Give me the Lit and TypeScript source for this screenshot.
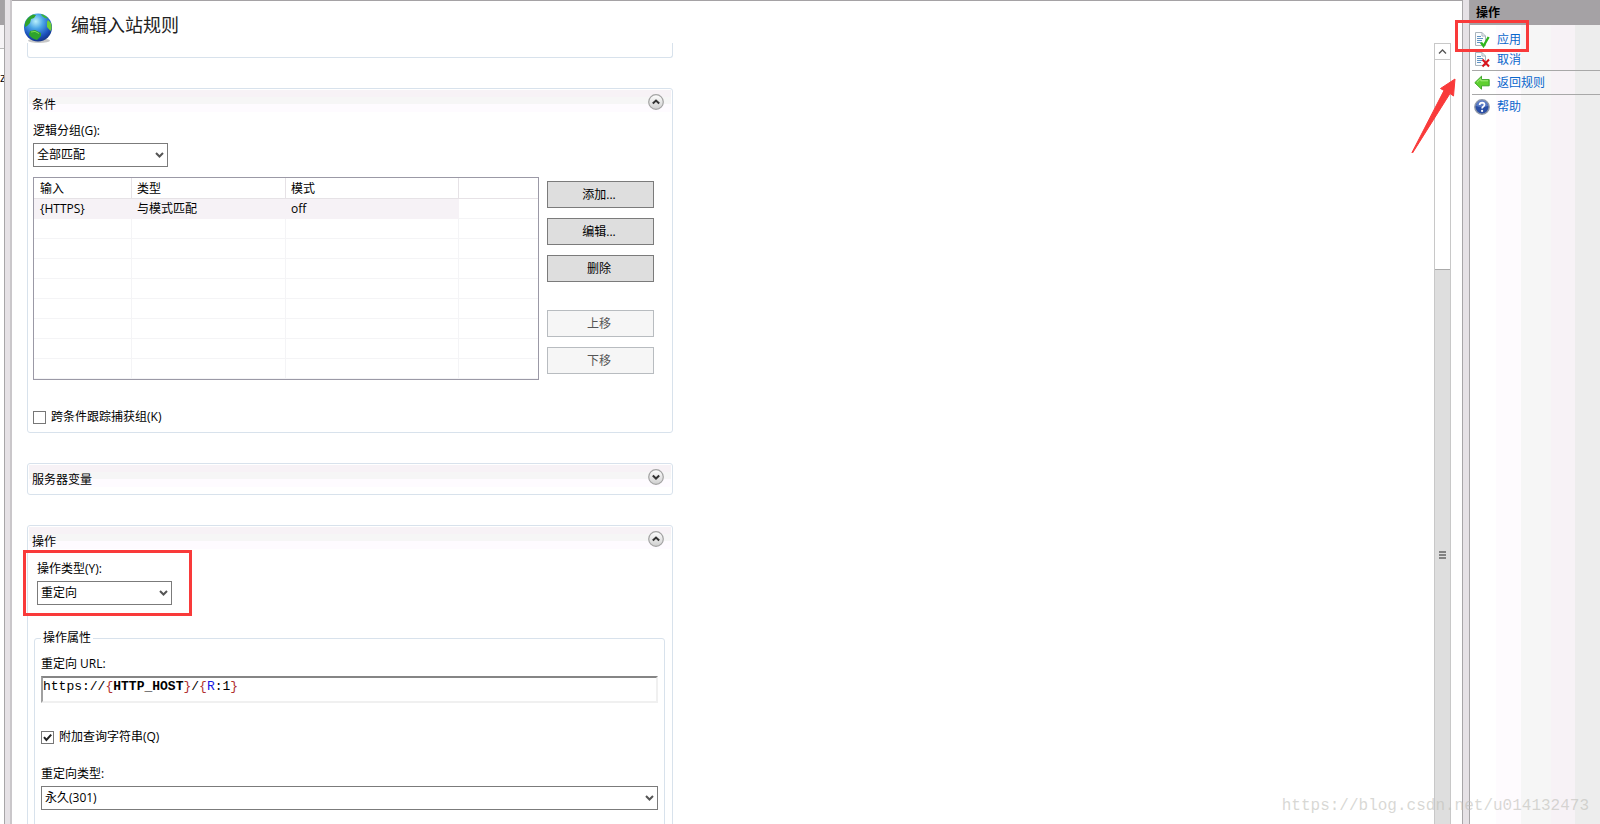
import { LitElement, html, css, svg, nothing } from "lit";
import { customElement, property } from "lit/decorators.js";

const base = css`
  *, *::before, *::after { box-sizing: border-box; }
  :host { font: 12px/18px "Open Sans", "Noto Sans CJK SC", sans-serif; color: #000; }
`;

const chevron = svg`<path d="M1 2 L4.5 5.5 L8 2" fill="none" stroke="#555" stroke-width="2"/>`;

@customElement("rule-panel")
class RulePanel extends LitElement {
  @property() heading = "";
  @property({ type: Boolean }) open = false;

  static styles = [base, css`
    :host { display: block; border: 1px solid #d8e2ec; border-radius: 3px; background: #fff; }
    .head { display: flex; align-items: flex-start; justify-content: space-between; height: 30px; padding: 5px 8px 0 4px; position: relative; }
    .head::before { content: ""; position: absolute; inset: 1px 1px 7px 1px;
      background: linear-gradient(#f7f2f6 0 7px, #f6f6f6 7px 14px, #fefbff 14px); }
    .title { position: relative; margin: 0; padding-top: 2px; font-size: 12px; line-height: 18px; font-weight: 400; }
    .toggle { position: relative; width: 16px; height: 16px; padding: 0; border: 0; background: none; }
    .toggle svg { display: block; }
  `];

  render() {
    return html`
      <div class="head">
        <h2 class="title">${this.heading}</h2>
        <button class="toggle" aria-label=${this.heading} aria-expanded=${this.open}>
          <svg width="16" height="16" viewBox="0 0 16 16">
            <defs><linearGradient id="g" x2="0" y2="1"><stop offset="0" stop-color="#fff"/><stop offset="1" stop-color="#cfcfcf"/></linearGradient></defs>
            <circle cx="8" cy="8" r="7.3" fill="url(#g)" stroke="#a3a3a3" stroke-width="1.2"/>
            <path d=${this.open ? "M4.8 9.6 L8 6.6 L11.2 9.6" : "M4.8 6.6 L8 9.6 L11.2 6.6"} fill="none" stroke="#333" stroke-width="2"/>
          </svg>
        </button>
      </div>
      ${this.open ? html`<slot></slot>` : nothing}`;
  }
}

const rows = [["{HTTPS}", "与模式匹配", "off", ""], ...Array.from({ length: 8 }, () => ["", "", "", ""])];

const pageIcon = svg`
  <path d="M1.5 .5 H8 L11.5 4 V13.5 H1.5 Z" fill="#fbfcfd" stroke="#a9b4bd"/>
  <path d="M8 .5 V4 H11.5" fill="none" stroke="#a9b4bd"/>
  <path d="M3 4.5 H7 M3 6.5 H9 M3 8.5 H8 M3 10.5 H7" stroke="#5f93c4"/>`;

const icons = {
  apply: svg`${pageIcon}<path d="M7 10.5 L9.5 14 L14.6 5" fill="none" stroke="#2fb51c" stroke-width="2.3"/>`,
  cancel: svg`${pageIcon}<path d="M8.5 7.5 L15 14.5 M15 7.5 L8.5 14.5" stroke="#d8141c" stroke-width="2"/>`,
  back: svg`<path d="M.8 7.7 L7.5 1.2 V4.6 H15.2 V10.8 H7.5 V14.2 Z" fill="#5fd02f" stroke="#3fa62a"/><path d="M3 7.3 L6.8 3.6 V5.8 H14" fill="none" stroke="#a6ee7d"/>`,
  help: svg`<circle cx="8" cy="8" r="7.2" fill="#2b4fa5" stroke="#8f98a8" stroke-width="1.4"/><path d="M2 7 A6 6 0 0 1 14 7 Q8 9 2 7" fill="#6f8fd2" opacity=".7"/><path d="M5.6 6 Q5.8 3.7 8.1 3.7 Q10.5 3.8 10.5 5.8 Q10.4 7 9.1 7.8 Q8.1 8.5 8.1 9.6" fill="none" stroke="#fff" stroke-width="1.7"/><circle cx="8.1" cy="11.9" r="1.1" fill="#fff"/>`,
};

@customElement("app-root")
class AppRoot extends LitElement {
  static styles = [base, css`
    :host { display: flex; height: 100vh; overflow: hidden; position: relative; background: #fff; }
    button, input, select { font: inherit; color: inherit; }

    .tree { flex: 0 0 4px; overflow: hidden; }
    .tree-head { height: 25px; background: #a5a2a5; }
    .tree-bar { height: 24px; background: #f6f4f6; border-bottom: 1px solid #bbb; }
    .tree-item { padding-top: 20px; }
    .splitter { flex: 0 0 8px; background: #e6e2e6; border: solid #a8a6a8; border-width: 0 1px; }
    .splitter.left { border-right: 2px solid #cac7ca; }

    main { flex: 1; min-width: 0; display: flex; flex-direction: column; border-top: 1px solid #a5a2a5; }
    .caption { flex: 0 0 42px; display: flex; align-items: flex-start; gap: 17px; padding: 10px 0 0 11px; }
    .caption h1 { margin: 0; font-size: 18px; line-height: 28px; font-weight: 400; color: #222; }
    .view { flex: 1; min-height: 0; display: flex; justify-content: space-between; padding: 0 11px 0 15px; }
    .content { flex: 0 1 646px; display: flex; flex-direction: column; gap: 30px; overflow: hidden; }
    .content > * { flex: none; }
    .prev { height: 15px; border: 1px solid #d8e2ec; border-top: 0; border-radius: 0 0 3px 3px; }

    .scroll { flex: 0 0 17px; display: flex; flex-direction: column; overflow: hidden; border: solid #c8c8c8; border-width: 0 1px; }
    .scroll button { flex: 0 0 17px; display: grid; place-items: center; padding: 0; border: solid #c8c8c8; border-width: 1px 0; background: #fff; }
    .track { flex: 0 0 209px; }
    .thumb { flex: 0 0 571px; display: grid; place-items: center; background: #dedede; border-top: 1px solid #aaa; }

    .body { display: flex; flex-direction: column; padding: 3px 5px 6px; }
    .field { display: flex; flex-direction: column; gap: 3px; }
    .field > label { align-self: flex-start; }
    .select { display: grid; align-items: center; justify-items: end; width: 135px; }
    .select.wide { width: auto; }
    .select > * { grid-area: 1 / 1; }
    .select svg { margin-right: 4px; pointer-events: none; }
    select { appearance: none; width: 100%; height: 24px; margin: 0; padding: 0 20px 0 3px; border: 1px solid #7b7b7b; border-radius: 0; background: #fff; }

    .grid { display: flex; align-items: flex-start; gap: 8px; margin: 10px 13px 0 0; }
    .frame { flex: 1; border: 1px solid #9b99a6; }
    table { width: 100%; table-layout: fixed; border-spacing: 0; }
    th, td { height: 20px; padding: 1px 0 0 5px; text-align: left; font-weight: 400; line-height: 18px; border: solid #f4f4f6; border-width: 0 1px 1px 0; }
    th { height: 21px; border-color: #e6e2e6; }
    th:last-child, td:last-child { border-right: 0; }
    th:first-child, td:first-child { padding-left: 6px; }
    .c1 { width: 98px; } .c2 { width: 154px; } .c3 { width: 173px; }
    .picked td:not(:last-child) { background: #f6f2f6; border-color: #f6f2f6; }
    .buttons { flex: 0 0 107px; display: flex; flex-direction: column; gap: 10px; padding-top: 4px; }
    .buttons button { height: 27px; padding: 0 3px 0 0; border: 1px solid #7b7b7b; background: #dedede; }
    .buttons button:disabled { border-color: #b8bcc0; background: #f6f6f6; color: #555; }
    .buttons .second { margin-top: 18px; }

    .check { display: flex; align-items: center; gap: 5px; }
    .check input { appearance: none; width: 13px; height: 13px; margin: 0; border: 1px solid #777; background: #fff; }
    .tick { display: grid; width: 13px; height: 13px; }
    .tick > * { grid-area: 1 / 1; }
    .tick svg { display: none; pointer-events: none; }
    .tick input:checked + svg { display: block; }
    .track-groups { margin-top: 28px; }
    .action { padding: 4px 7px 6px 6px; }
    .action > .field { padding-left: 3px; }

    fieldset { min-width: 0; margin: 24px 0 0; padding: 8px 6px 30px; border: 1px solid #d8e2ec; border-radius: 3px; }
    legend { padding: 0 2px; }
    .url { display: grid; height: 27px; border: 2px solid #f0f0f0; border-top-color: #858585; border-left-color: #a0a0a0; font: 13px/18px "Liberation Mono", "Courier New", monospace; }
    .url > * { grid-area: 1 / 1; }
    .url input { width: 100%; height: 18px; padding: 0; border: 0; outline: 0; background: none; color: transparent; caret-color: #000; }
    .code { white-space: pre; pointer-events: none; }
    .brace { color: #b03030; } .ref { color: #1818e0; }
    .append { margin-top: 25px; }
    .type { margin-top: 19px; }

    .actions { flex: 0 0 130px; background: linear-gradient(to right, #fff 26px, #fefbfe 26px 51px, #f6f6f6 51px 81px, #f7f2f6 81px 105px, #ededed 105px); }
    .actions h2 { height: 25px; margin: 0; padding: 4px 0 0 6px; background: #a5a2a5; font-size: 12px; line-height: 18px; font-weight: 700; }
    .actions ul { list-style: none; margin: 0; padding: 5px 0 0 2px; }
    .actions li { height: 20px; }
    .actions li.ruled { height: 24px; padding-top: 2px; border-top: 1px solid #a8a8a8; }
    .actions a { display: flex; align-items: center; gap: 7px; padding-left: 2px; height: 20px; color: #0a66cc; text-decoration: none; }

    .mark { position: absolute; border: 3px solid #f93a3a; pointer-events: none; }
    .mark.apply { top: 20px; right: 71px; width: 74px; height: 32px; }
    .mark.kind { top: 550px; left: 23px; width: 169px; height: 66px; }
    .arrow { position: absolute; top: 78px; right: 144px; pointer-events: none; }
    .watermark { position: absolute; right: 11px; bottom: 8px; font: 16px/20px "Liberation Mono", monospace; color: rgba(190, 190, 184, .6); pointer-events: none; }
  `];

  private select(id: string, value: string, wide = false) {
    return html`<div class="select ${wide ? "wide" : ""}">
      <select id=${id}><option>${value}</option></select>
      <svg width="9" height="8" viewBox="0 0 9 8">${chevron}</svg>
    </div>`;
  }

  private check(id: string, text: string, checked: boolean, cls: string) {
    return html`<div class="check ${cls}">
      <span class="tick"><input type="checkbox" id=${id} .checked=${checked}>
        <svg width="13" height="13" viewBox="0 0 13 13"><path d="M3 6.2 L5.4 9 L10.2 3.6" fill="none" stroke="#222" stroke-width="2"/></svg></span>
      <label for=${id}>${text}</label>
    </div>`;
  }

  private icon(name: keyof typeof icons) {
    return html`<svg width="16" height="16" viewBox="0 0 16 16">${icons[name]}</svg>`;
  }

  render() {
    return html`
      <div class="tree"><div class="tree-head"></div><div class="tree-bar"></div><div class="tree-item">z</div></div>
      <div class="splitter left"></div>
      <main>
        <header class="caption">
          <svg width="31" height="32" viewBox="0 0 31 32">
            <defs><radialGradient id="sea" cx=".42" cy=".28" r=".75">
              <stop offset="0" stop-color="#b9f0fb"/><stop offset=".35" stop-color="#4ba6e6"/><stop offset=".75" stop-color="#1b50bd"/><stop offset="1" stop-color="#123080"/>
            </radialGradient></defs>
            <ellipse cx="16" cy="29.6" rx="11" ry="2.4" fill="#999" opacity=".55"/>
            <circle cx="15" cy="16.5" r="14" fill="url(#sea)"/>
            <path d="M2 12 Q4 6 10 3.5 L13 4 L11 7 L8 8 L7 12 L4 15 L2 16 Z" fill="#2fa32b"/>
            <path d="M18 3 Q23 4.5 25 7.5 L22 7 L19 5 Z" fill="#3cb832"/>
            <path d="M25 9 L28 12 Q29.5 17 27.5 20 L24 16 L24 11 Z" fill="#6fd035"/>
            <path d="M7 20 L12 19 L18 22 L18 25 L14 29 Q9 28 6 24 Z" fill="#2ea32c"/>
            <path d="M8 21 L12 20.4 L16 22.5" fill="none" stroke="#7ddb55"/>
          </svg>
          <h1>编辑入站规则</h1>
        </header>
        <div class="view">
          <div class="content">
            <div class="prev"></div>
            <rule-panel heading="条件" open>
              <div class="body">
                <div class="field"><label for="group">逻辑分组(G):</label>${this.select("group", "全部匹配")}</div>
                <div class="grid">
                  <div class="frame"><table>
                    <thead><tr><th class="c1">输入</th><th class="c2">类型</th><th class="c3">模式</th><th></th></tr></thead>
                    <tbody>${rows.map((r, i) => html`<tr class=${i ? "" : "picked"}>${r.map((c) => html`<td>${c}</td>`)}</tr>`)}</tbody>
                  </table></div>
                  <div class="buttons">
                    <button>添加...</button><button>编辑...</button><button>删除</button>
                    <button class="second" disabled>上移</button><button disabled>下移</button>
                  </div>
                </div>
                ${this.check("capture", "跨条件跟踪捕获组(K)", false, "track-groups")}
              </div>
            </rule-panel>
            <rule-panel heading="服务器变量"></rule-panel>
            <rule-panel heading="操作" open>
              <div class="body action">
                <div class="field"><label for="kind">操作类型(Y):</label>${this.select("kind", "重定向")}</div>
                <fieldset>
                  <legend>操作属性</legend>
                  <div class="field">
                    <label for="url">重定向 URL:</label>
                    <div class="url">
                      <input id="url" value="https://{HTTP_HOST}/{R:1}" spellcheck="false">
                      <span class="code" aria-hidden="true">https://<span class="brace">{</span><b>HTTP_HOST</b><span class="brace">}</span>/<span class="brace">{</span><span class="ref">R</span>:1<span class="brace">}</span></span>
                    </div>
                  </div>
                  ${this.check("append", "附加查询字符串(Q)", true, "append")}
                  <div class="field type"><label for="status">重定向类型:</label>${this.select("status", "永久(301)", true)}</div>
                </fieldset>
              </div>
            </rule-panel>
          </div>
          <div class="scroll">
            <button aria-label="向上滚动"><svg width="9" height="7" viewBox="0 0 9 7"><path d="M1 5.5 L4.5 2 L8 5.5" fill="none" stroke="#555" stroke-width="1.3"/></svg></button>
            <div class="track"></div>
            <div class="thumb"><svg width="7" height="8" viewBox="0 0 7 8"><path d="M0 1 H7 M0 4 H7 M0 7 H7" stroke="#666" stroke-width="1.7"/></svg></div>
          </div>
        </div>
      </main>
      <div class="splitter"></div>
      <aside class="actions">
        <h2>操作</h2>
        <ul>
          <li><a href="#apply">${this.icon("apply")}应用</a></li>
          <li><a href="#cancel">${this.icon("cancel")}取消</a></li>
          <li class="ruled"><a href="#back">${this.icon("back")}返回规则</a></li>
          <li class="ruled"><a href="#help">${this.icon("help")}帮助</a></li>
        </ul>
      </aside>
      <div class="mark apply"></div>
      <div class="mark kind"></div>
      <svg class="arrow" width="46" height="76" viewBox="0 0 46 76"><path d="M45 1 L43.5 18 L40 15.5 L2.5 75 L2 74.5 L34 12.5 L30.5 10.5 Z" fill="#f93a3a" stroke="#f93a3a"/></svg>
      <div class="watermark">https://blog.csdn.net/u014132473</div>
    `;
  }
}
